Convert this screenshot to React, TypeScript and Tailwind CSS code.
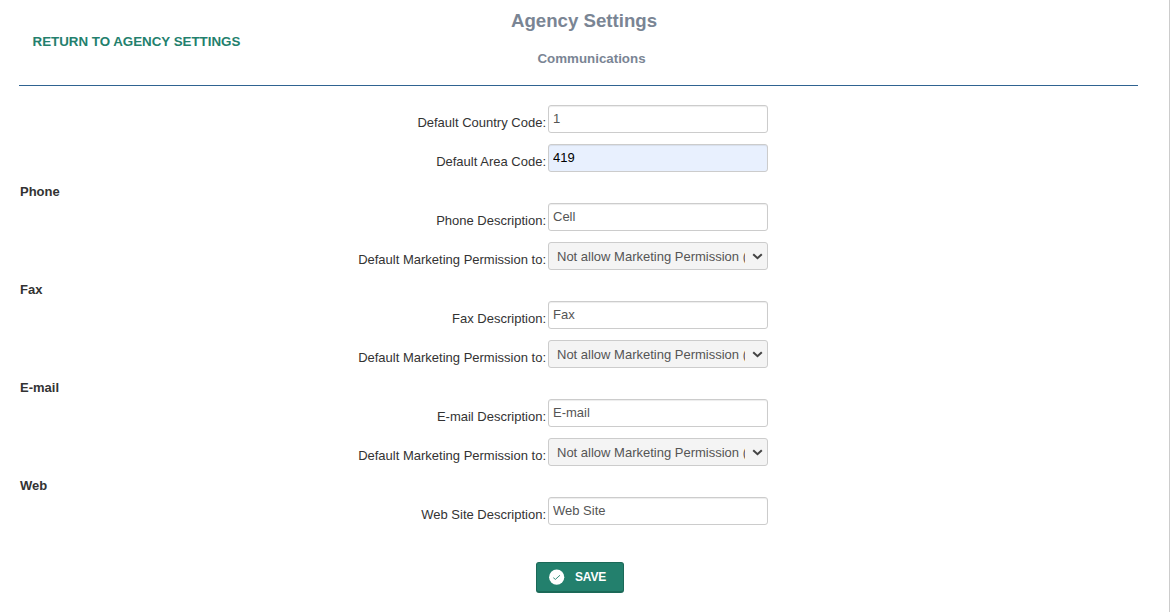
import React from "react";

type FieldProps = { label: string; value: string; kind?: "text" | "filled" | "select" };

const PERMISSION = "Not allow Marketing Permission (";

function Field({ label, value, kind = "text" }: FieldProps) {
  return (
    <div className="flex h-[39px] items-start">
      <label className="w-[546px] pt-[9px] text-right leading-[18px] text-[#333]">{label}</label>
      {kind === "select" ? (
        <div className="ml-0.5 flex h-7 w-[220px] items-center rounded-[3px] border border-[#ccc] bg-[#f4f4f4] pl-2 text-[#555]">
          <span className="w-[188px] overflow-hidden whitespace-nowrap pt-px leading-[18px]">{value}</span>
          <svg className="ml-[7px] h-[7px] w-[11px]" viewBox="0 0 11 7" fill="none" stroke="#444" strokeWidth="2">
            <path d="M1.2 1.2 L5.5 5.2 L9.8 1.2" />
          </svg>
        </div>
      ) : (
        <input
          aria-label={label}
          defaultValue={value}
          className={
            kind === "filled"
              ? "ml-0.5 h-7 w-[220px] rounded-[3px] border border-[#ccc] bg-[#e8f0fe] px-1 pb-[2px] text-black shadow-[inset_0_1px_1px_rgba(0,0,0,0.075)] outline-none"
              : "ml-0.5 h-7 w-[220px] rounded-[3px] border border-[#ccc] bg-white px-1 pb-[2px] text-[#555] shadow-[inset_0_1px_1px_rgba(0,0,0,0.075)] outline-none"
          }
        />
      )}
    </div>
  );
}

function Section({ title }: { title: string }) {
  return <h3 className="h-5 pl-5 font-bold leading-[18px] text-[#333]">{title}</h3>;
}

export default function App() {
  return (
    <main className="h-[612px] w-[1170px] overflow-hidden border-r border-[#ccc] bg-white font-['Liberation_Sans',Arial,sans-serif] text-[13px]">
      <header className="mx-[19px] flex h-[86px] w-[1119px] border-b border-[#2f6391]">
        <a className="w-[419px] pl-[13.5px] pt-8 text-[13.33px] font-bold leading-[19px] text-[#23806d]">
          RETURN TO AGENCY SETTINGS
        </a>
        <div className="w-[292px] text-center font-bold text-[#7a8594]">
          <h1 className="pt-[9px] text-[18.67px] leading-6">Agency Settings</h1>
          <h2 className="pl-[15px] pt-4 text-[13.33px] leading-5">Communications</h2>
        </div>
      </header>
      <form className="pt-[19px]">
        <Field label="Default Country Code:" value="1" />
        <Field label="Default Area Code:" value="419" kind="filled" />
        <Section title="Phone" />
        <Field label="Phone Description:" value="Cell" />
        <Field label="Default Marketing Permission to:" value={PERMISSION} kind="select" />
        <Section title="Fax" />
        <Field label="Fax Description:" value="Fax" />
        <Field label="Default Marketing Permission to:" value={PERMISSION} kind="select" />
        <Section title="E-mail" />
        <Field label="E-mail Description:" value="E-mail" />
        <Field label="Default Marketing Permission to:" value={PERMISSION} kind="select" />
        <Section title="Web" />
        <Field label="Web Site Description:" value="Web Site" />
        <button
          type="button"
          className="ml-[536px] mt-[26px] flex h-[31px] w-[88px] items-center rounded-[3px] border border-b-2 border-[#1b6958] bg-[#23806d] pl-3 text-[12px] font-bold text-white"
        >
          <svg className="h-4 w-4" viewBox="0 0 16 16">
            <circle cx="7.7" cy="8.2" r="7.6" fill="white" />
            <path d="M4.3 8.7 L6.4 10.4 L11 6.2" fill="none" stroke="#23806d" strokeWidth="0.9" />
          </svg>
          <span className="ml-2.5 tracking-[-0.2px]">SAVE</span>
        </button>
      </form>
    </main>
  );
}
